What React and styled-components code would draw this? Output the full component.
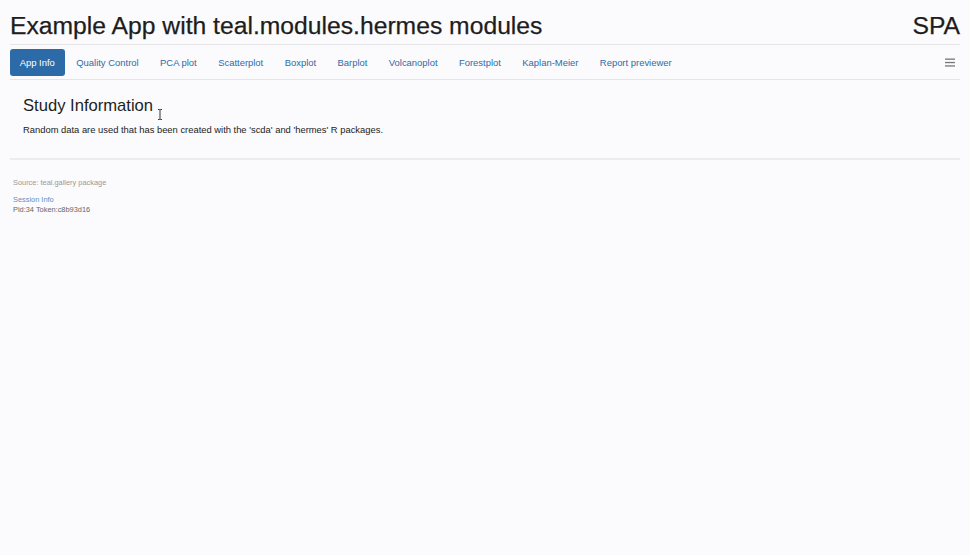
import React from "react";
import styled, { createGlobalStyle } from "styled-components";

const GlobalStyle = createGlobalStyle`
  html, body {
    margin: 0;
    padding: 0;
    background: #fbfafc;
    font-family: "Liberation Sans", Arial, sans-serif;
    color: #333;
  }
`;

const Page = styled.div`
  position: relative;
  min-height: 555px;
  padding: 0 10px;
`;

const TitleBar = styled.div`
  display: flex;
  justify-content: space-between;
  align-items: flex-end;
  height: 44px;
  border-bottom: 1px solid #e5e5e8;
`;

const Title = styled.h1`
  margin: 0 0 5px;
  font-size: 24.7px;
  font-weight: 400;
  color: #1d1d1d;
  line-height: 1;
  -webkit-text-stroke: 0.25px #1d1d1d;
`;

const Nav = styled.nav`
  display: flex;
  align-items: center;
  height: 34px;
  border-bottom: 1px solid #e5e5e8;
`;

const Pill = styled.a`
  display: flex;
  align-items: center;
  height: 27px;
  padding: 0 9.7px;
  margin-right: 2px;
  border-radius: 3px;
  font-size: 9.45px;
  text-decoration: none;
  color: ${(props) => (props.active ? "#fff" : "#2d6ca8")};
  background: ${(props) => (props.active ? "#2c6aa8" : "transparent")};
`;

const Burger = styled.div`
  margin-left: auto;
  margin-right: 5px;
  color: #777;
  display: flex;
`;

const Section = styled.section`
  padding: 17px 13px 0;
  height: 61px;
  border-bottom: 2px solid #ececee;
  margin-bottom: 18px;
`;

const Heading = styled.h3`
  margin: 0 0 9px;
  font-size: 16.6px;
  font-weight: 400;
  color: #1e1e1e;
  line-height: 1.1;
`;

const Text = styled.p`
  margin: 0;
  font-size: 9.4px;
  color: #222;
`;

const Footer = styled.footer`
  padding: 0 3px;
  font-size: 7.4px;
`;

const Source = styled.div`
  color: #999;
  margin-bottom: 8px;
`;

const SessionLink = styled.a`
  display: block;
  color: #5e90c4;
  text-decoration: none;
  margin-bottom: 1px;
`;

const Pid = styled.div`
  color: #666;
`;

const Cursor = styled.svg`
  position: absolute;
  left: 157px;
  top: 109px;
`;

const tabs = [
  "App Info",
  "Quality Control",
  "PCA plot",
  "Scatterplot",
  "Boxplot",
  "Barplot",
  "Volcanoplot",
  "Forestplot",
  "Kaplan-Meier",
  "Report previewer",
];

export default function App() {
  return (
    <Page>
      <GlobalStyle />
      <TitleBar>
        <Title>Example App with teal.modules.hermes modules</Title>
        <Title>SPA</Title>
      </TitleBar>
      <Nav>
        {tabs.map((t, i) => (
          <Pill key={t} active={i === 0}>
            {t}
          </Pill>
        ))}
        <Burger>
          <svg width="10" height="9" viewBox="0 0 10 9">
            <rect x="0" y="0.5" width="10" height="1.3" fill="#777" />
            <rect x="0" y="3.9" width="10" height="1.3" fill="#777" />
            <rect x="0" y="7.3" width="10" height="1.3" fill="#777" />
          </svg>
        </Burger>
      </Nav>
      <Section>
        <Heading>Study Information</Heading>
        <Text>
          Random data are used that has been created with the 'scda' and
          'hermes' R packages.
        </Text>
      </Section>
      <Footer>
        <Source>Source: teal.gallery package</Source>
        <SessionLink>Session Info</SessionLink>
        <Pid>Pid:34 Token:c8b93d16</Pid>
      </Footer>
      <Cursor width="6" height="11" viewBox="0 0 6 11">
        <path d="M1 0.5h1.5l0.5 0.5l0.5-0.5h1.5M3 1v9M1 10.5h1.5l0.5-0.5l0.5 0.5h1.5" stroke="#333" strokeWidth="1" fill="none" />
      </Cursor>
    </Page>
  );
}
